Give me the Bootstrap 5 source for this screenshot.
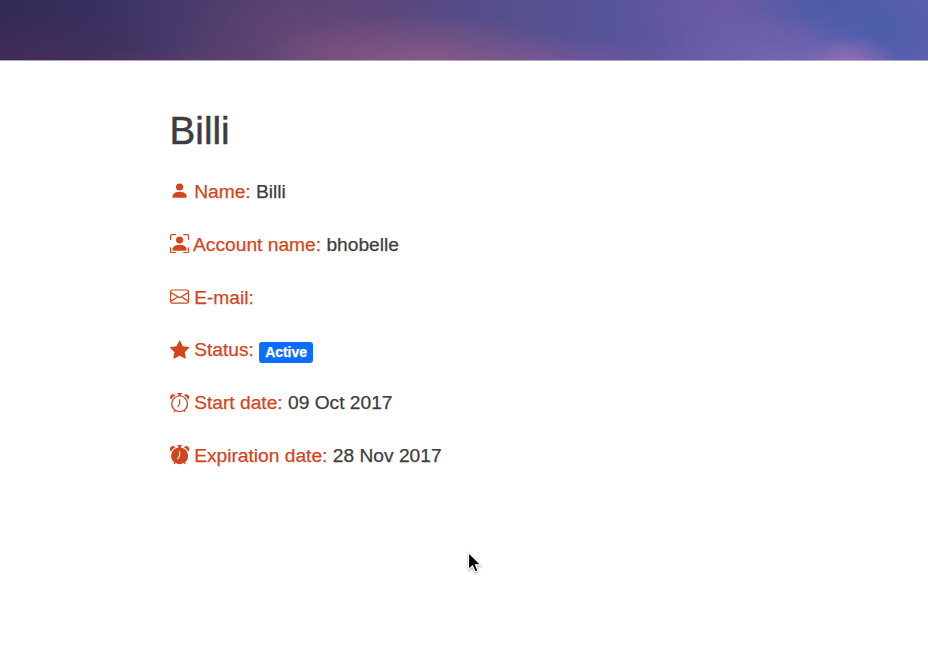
<!DOCTYPE html>
<html lang="en">
<head>
<meta charset="utf-8">
<meta name="viewport" content="width=device-width, initial-scale=1">
<title>Billi</title>
<link href="https://cdn.jsdelivr.net/npm/bootstrap@5.3.0/dist/css/bootstrap.min.css" rel="stylesheet">
<style>
  body { font-family: "Liberation Sans", Arial, sans-serif; font-size: 19.2px; color: #3c3d40; min-height: 653px; overflow: hidden; -webkit-text-stroke: .25px currentColor; }
  .sky {
    height: 61px;
    border-bottom: 1px solid #b3a6c4;
    background:
      radial-gradient(ellipse 50px 26px at 848px 62px, rgba(152,112,182,.95), rgba(152,112,182,0)),
      radial-gradient(ellipse 75px 36px at 825px -2px, rgba(74,92,166,.95), rgba(74,92,166,0)),
      radial-gradient(ellipse 80px 50px at 880px 28px, rgba(74,94,170,.95), rgba(74,94,170,0)),
      radial-gradient(ellipse 130px 50px at 780px 60px, rgba(122,104,180,.8), rgba(122,104,180,0)),
      radial-gradient(ellipse 90px 45px at 725px 12px, rgba(112,92,164,.7), rgba(112,92,164,0)),
      radial-gradient(ellipse 170px 52px at 425px 66px, rgba(142,92,136,.95), rgba(142,92,136,0)),
      radial-gradient(ellipse 150px 90px at 320px 48px, rgba(112,74,118,.75), rgba(112,74,118,0)),
      radial-gradient(ellipse 150px 26px at 570px 63px, rgba(122,86,156,.6), rgba(122,86,156,0)),
      radial-gradient(ellipse 150px 60px at 40px 70px, rgba(76,46,88,.8), rgba(76,46,88,0)),
      radial-gradient(ellipse 110px 22px at 190px 64px, rgba(90,60,108,.7), rgba(90,60,108,0)),
      linear-gradient(90deg, #2f2b55 0, #37305f 90px, #46396a 170px, #503f70 270px, #54467e 390px, #554e8b 490px, #58549a 610px, #6058a2 700px, #5d5aa6 790px, #5a5cac 850px, #5f5eae 928px);
  }
  .profile { padding: 46px 0 0 169.6px; }
  .profile-title { font-size: 38.6px; line-height: 48px; margin-bottom: 23px; color: #3c3d40; -webkit-text-stroke-width: .5px; }
  .entry { line-height: 28.8px; }
  .entry-label { color: #d2451e; }
  .glyph { width: 19.2px; height: 19.2px; fill: #d2451e; vertical-align: -2.6px; }
  .state { font-size: 13.9px; border-radius: 3px; padding: 4px 6px 3px; vertical-align: -1px; }
  .pointer { left: 467px; top: 550px; width: 17px; height: 25px; }
</style>
</head>
<body class="bg-white position-relative">
<header class="sky"></header>
<main class="profile">
  <h1 class="profile-title fw-normal">Billi</h1>
  <p class="entry mb-4"><svg class="glyph" viewBox="0 0 16 16"><path d="M3 14s-1 0-1-1 1-4 6-4 6 3 6 4-1 1-1 1H3zm5-6a3 3 0 1 0 0-6 3 3 0 0 0 0 6z"/></svg> <span class="entry-label">Name:</span> Billi</p>
  <p class="entry mb-4"><svg class="glyph" viewBox="0 0 16 16"><path d="M1.5 1a.5.5 0 0 0-.5.5v3a.5.5 0 0 1-1 0v-3A1.5 1.5 0 0 1 1.5 0h3a.5.5 0 0 1 0 1h-3zM11 .5a.5.5 0 0 1 .5-.5h3A1.5 1.5 0 0 1 16 1.5v3a.5.5 0 0 1-1 0v-3a.5.5 0 0 0-.5-.5h-3a.5.5 0 0 1-.5-.5zM.5 11a.5.5 0 0 1 .5.5v3a.5.5 0 0 0 .5.5h3a.5.5 0 0 1 0 1h-3A1.5 1.5 0 0 1 0 14.5v-3a.5.5 0 0 1 .5-.5zm15 0a.5.5 0 0 1 .5.5v3a1.5 1.5 0 0 1-1.5 1.5h-3a.5.5 0 0 1 0-1h3a.5.5 0 0 0 .5-.5v-3a.5.5 0 0 1 .5-.5z"/><path d="M3 14s-1 0-1-1 1-4 6-4 6 3 6 4-1 1-1 1H3zm8-9a3 3 0 1 1-6 0 3 3 0 0 1 6 0z"/></svg> <span class="entry-label">Account name:</span> bhobelle</p>
  <p class="entry mb-4"><svg class="glyph" viewBox="0 0 16 16"><path d="M0 4a2 2 0 0 1 2-2h12a2 2 0 0 1 2 2v8a2 2 0 0 1-2 2H2a2 2 0 0 1-2-2V4Zm2-1a1 1 0 0 0-1 1v.217l7 4.2 7-4.2V4a1 1 0 0 0-1-1H2Zm13 2.383-4.708 2.825L15 11.105V5.383Zm-.034 6.876-5.64-3.471L8 9.583l-1.326-.795-5.64 3.47A1 1 0 0 0 2 13h12a1 1 0 0 0 .966-.741ZM1 11.105l4.708-2.897L1 5.383v5.722Z"/></svg> <span class="entry-label">E-mail:</span></p>
  <p class="entry mb-4"><svg class="glyph" viewBox="0 0 16 16"><path d="M3.612 15.443c-.386.198-.824-.149-.746-.592l.83-4.73L.173 6.765c-.329-.314-.158-.888.283-.95l4.898-.696L7.538.792c.197-.39.73-.39.927 0l2.184 4.327 4.898.696c.441.062.612.636.282.95l-3.522 3.356.83 4.73c.078.443-.36.79-.746.592L8 13.187l-4.389 2.256z"/></svg> <span class="entry-label">Status:</span> <span class="badge text-bg-primary state">Active</span></p>
  <p class="entry mb-4"><svg class="glyph" viewBox="0 0 16 16"><path d="M8.5 5.5a.5.5 0 0 0-1 0v3.362l-1.429 2.38a.5.5 0 1 0 .858.515l1.5-2.5A.5.5 0 0 0 8.5 9V5.5z"/><path d="M6.5 0a.5.5 0 0 0 0 1H7v1.07a7.001 7.001 0 0 0-3.273 12.474l-.602.602a.5.5 0 0 0 .707.708l.746-.746A6.97 6.97 0 0 0 8 16a6.97 6.97 0 0 0 3.422-.892l.746.746a.5.5 0 0 0 .707-.708l-.601-.602A7.001 7.001 0 0 0 9 2.07V1h.5a.5.5 0 0 0 0-1h-3zm1.038 3.018a6.093 6.093 0 0 1 .924 0 6 6 0 1 1-.924 0zM0 3.5c0 .753.333 1.429.86 1.887A8.035 8.035 0 0 1 4.387 1.86 2.5 2.5 0 0 0 0 3.5zM13.5 1c-.753 0-1.429.333-1.887.86a8.035 8.035 0 0 1 3.527 3.527A2.5 2.5 0 0 0 13.5 1z"/></svg> <span class="entry-label">Start date:</span> 09 Oct 2017</p>
  <p class="entry mb-4"><svg class="glyph" viewBox="0 0 16 16"><path d="M6 .5a.5.5 0 0 1 .5-.5h3a.5.5 0 0 1 0 1H9v1.07a7.001 7.001 0 0 1 3.274 12.474l.601.602a.5.5 0 0 1-.707.708l-.746-.746A6.97 6.97 0 0 1 8 16a6.97 6.97 0 0 1-3.422-.892l-.746.746a.5.5 0 0 1-.707-.708l.602-.602A7.001 7.001 0 0 1 7 2.07V1h-.5A.5.5 0 0 1 6 .5zm2.5 5a.5.5 0 0 0-1 0v3.362l-1.429 2.38a.5.5 0 1 0 .858.515l1.5-2.5A.5.5 0 0 0 8.5 9V5.5zM.86 5.387A2.5 2.5 0 1 1 4.387 1.86 8.035 8.035 0 0 0 .86 5.387zM11.613 1.86a2.5 2.5 0 1 1 3.527 3.527 8.035 8.035 0 0 0-3.527-3.527z"/></svg> <span class="entry-label">Expiration date:</span> 28 Nov 2017</p>
</main>
<svg class="pointer position-absolute" viewBox="0 0 17 25"><path d="M1.5 2.5v17l4-3.6 2.6 6.1 3-1.3-2.6-5.9h5.3z" fill="#000" stroke="#fff" stroke-width="1.2" style="filter:drop-shadow(0 1px 1px rgba(0,0,0,.4))"/></svg>
<script src="https://cdn.jsdelivr.net/npm/bootstrap@5.3.0/dist/js/bootstrap.bundle.min.js"></script>
</body>
</html>
